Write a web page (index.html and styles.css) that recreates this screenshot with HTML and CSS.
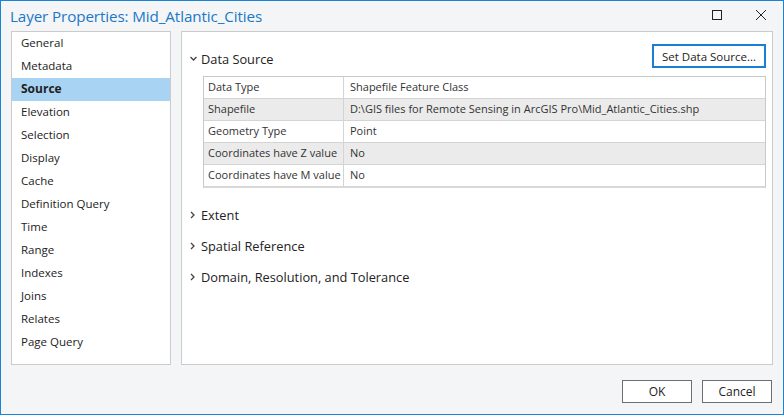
FILE: index.html
```html
<!DOCTYPE html>
<html>
<head>
<meta charset="utf-8">
<link rel="stylesheet" href="styles.css">
</head>
<body>
<div class="window">
  <div class="titlebar">
    <div class="title">Layer Properties: Mid_Atlantic_Cities</div>
    <div class="controls">
      <svg class="ctl" width="12" height="12" viewBox="0 0 12 12"><rect x="1.5" y="1.5" width="9" height="9" fill="none" stroke="#222" stroke-width="1"/></svg>
      <svg class="ctl" width="12" height="12" viewBox="0 0 12 12"><path d="M1 1 L11 11 M11 1 L1 11" stroke="#222" stroke-width="1" fill="none"/></svg>
    </div>
  </div>
  <div class="main">
    <nav class="sidebar">
      <div class="nav-item">General</div>
      <div class="nav-item">Metadata</div>
      <div class="nav-item active">Source</div>
      <div class="nav-item">Elevation</div>
      <div class="nav-item">Selection</div>
      <div class="nav-item">Display</div>
      <div class="nav-item">Cache</div>
      <div class="nav-item">Definition Query</div>
      <div class="nav-item">Time</div>
      <div class="nav-item">Range</div>
      <div class="nav-item">Indexes</div>
      <div class="nav-item">Joins</div>
      <div class="nav-item">Relates</div>
      <div class="nav-item">Page Query</div>
    </nav>
    <section class="content">
      <div class="section-head">
        <div class="expander head">
          <svg class="chev" width="8" height="8" viewBox="0 0 8 8"><path d="M0.5 2 L3.5 5 L6.5 2" stroke="#444" stroke-width="1.3" fill="none"/></svg>
          <span class="section-title">Data Source</span>
        </div>
        <button class="btn btn-primary">Set Data Source...</button>
      </div>
      <div class="table">
        <div class="row"><div class="cell key">Data Type</div><div class="cell val">Shapefile Feature Class</div></div>
        <div class="row alt"><div class="cell key">Shapefile</div><div class="cell val">D:\GIS files for Remote Sensing in ArcGIS Pro\Mid_Atlantic_Cities.shp</div></div>
        <div class="row"><div class="cell key">Geometry Type</div><div class="cell val">Point</div></div>
        <div class="row alt"><div class="cell key">Coordinates have Z value</div><div class="cell val">No</div></div>
        <div class="row"><div class="cell key">Coordinates have M value</div><div class="cell val">No</div></div>
      </div>
      <div class="collapsed-list">
        <div class="expander">
          <svg class="chev" width="8" height="8" viewBox="0 0 8 8"><path d="M1 1 L4 4 L1 7" stroke="#444" stroke-width="1.3" fill="none"/></svg>
          <span class="section-title">Extent</span>
        </div>
        <div class="expander">
          <svg class="chev" width="8" height="8" viewBox="0 0 8 8"><path d="M1 1 L4 4 L1 7" stroke="#444" stroke-width="1.3" fill="none"/></svg>
          <span class="section-title">Spatial Reference</span>
        </div>
        <div class="expander">
          <svg class="chev" width="8" height="8" viewBox="0 0 8 8"><path d="M1 1 L4 4 L1 7" stroke="#444" stroke-width="1.3" fill="none"/></svg>
          <span class="section-title">Domain, Resolution, and Tolerance</span>
        </div>
      </div>
    </section>
  </div>
  <div class="footer">
    <button class="btn btn-footer">OK</button>
    <button class="btn btn-footer">Cancel</button>
  </div>
</div>
</body>
</html>
```

FILE: styles.css
```css
* { box-sizing: border-box; }
html, body { margin: 0; padding: 0; }
body {
  font-family: "Open Sans", "Noto Sans", sans-serif;
  color: #1e1e1e;
  background: #ffffff;
}
.window {
  width: 784px;
  height: 415px;
  border: 1px solid #1883d7;
  background: #f4f5f6;
  display: flex;
  flex-direction: column;
}
.titlebar {
  height: 30px;
  display: flex;
  align-items: center;
  justify-content: space-between;
  padding: 0 16px 0 9px;
}
.title {
  color: #1a78c8;
  font-size: 15.2px;
  letter-spacing: -0.1px;
  margin-top: -1px;
}
.controls {
  display: flex;
  gap: 32px;
  margin-top: -2px;
}
.main {
  display: flex;
  gap: 10px;
  padding: 0 10px;
  height: 334px;
}
.sidebar {
  width: 160px;
  background: #fff;
  border: 1px solid #cbcbcb;
  display: flex;
  flex-direction: column;
}
.nav-item {
  height: 23px;
  line-height: 21px;
  padding-left: 9px;
  font-size: 11.5px;
  color: #222;
}
.nav-item.active {
  background: #a8d3f3;
  font-weight: 700;
  font-size: 12px;
}
.content {
  flex: 1;
  background: #fff;
  border: 1px solid #cbcbcb;
  padding: 12px 6px 0 8px;
}
.section-head {
  display: flex;
  justify-content: space-between;
  align-items: center;
  height: 24px;
}
.expander {
  display: flex;
  align-items: center;
  gap: 3px;
  height: 31px;
}
.expander.head {
  padding-top: 6px;
}
.chev { flex: none; }
.section-title {
  font-size: 12.8px;
  color: #222;
}
.btn {
  font-family: "Open Sans", "Noto Sans", sans-serif;
  background: #fff;
  color: #222;
  font-size: 11.5px;
  padding: 0;
  cursor: default;
}
.btn-primary {
  width: 114px;
  height: 24px;
  border: 1px solid #1a7fd4;
  outline: 1px solid #1a7fd4;
  outline-offset: -2px;
}
.table {
  margin: 8px 0 0 13px;
  border: 1px solid #c8c8c8;
  border-bottom: 2px solid #d8d8d8;
}
.row {
  display: flex;
  height: 22px;
  border-bottom: 1px solid #d4d4d4;
  background: #fff;
}
.row:last-child { border-bottom: none; height: 21px; }
.row.alt { background: #ebebeb; }
.cell {
  font-size: 11px;
  line-height: 20px;
  color: #333;
  white-space: nowrap;
  overflow: hidden;
}
.key {
  width: 140px;
  padding-left: 4px;
  border-right: 1px solid #d4d4d4;
}
.val {
  flex: 1;
  padding-left: 6px;
}
.collapsed-list {
  margin-top: 11px;
  display: flex;
  flex-direction: column;
}
.footer {
  display: flex;
  justify-content: flex-end;
  gap: 10px;
  padding: 15px 11px 0 0;
}
.btn-footer {
  width: 70px;
  height: 23px;
  border: 1px solid #6e6e6e;
  font-size: 12px;
}
```
